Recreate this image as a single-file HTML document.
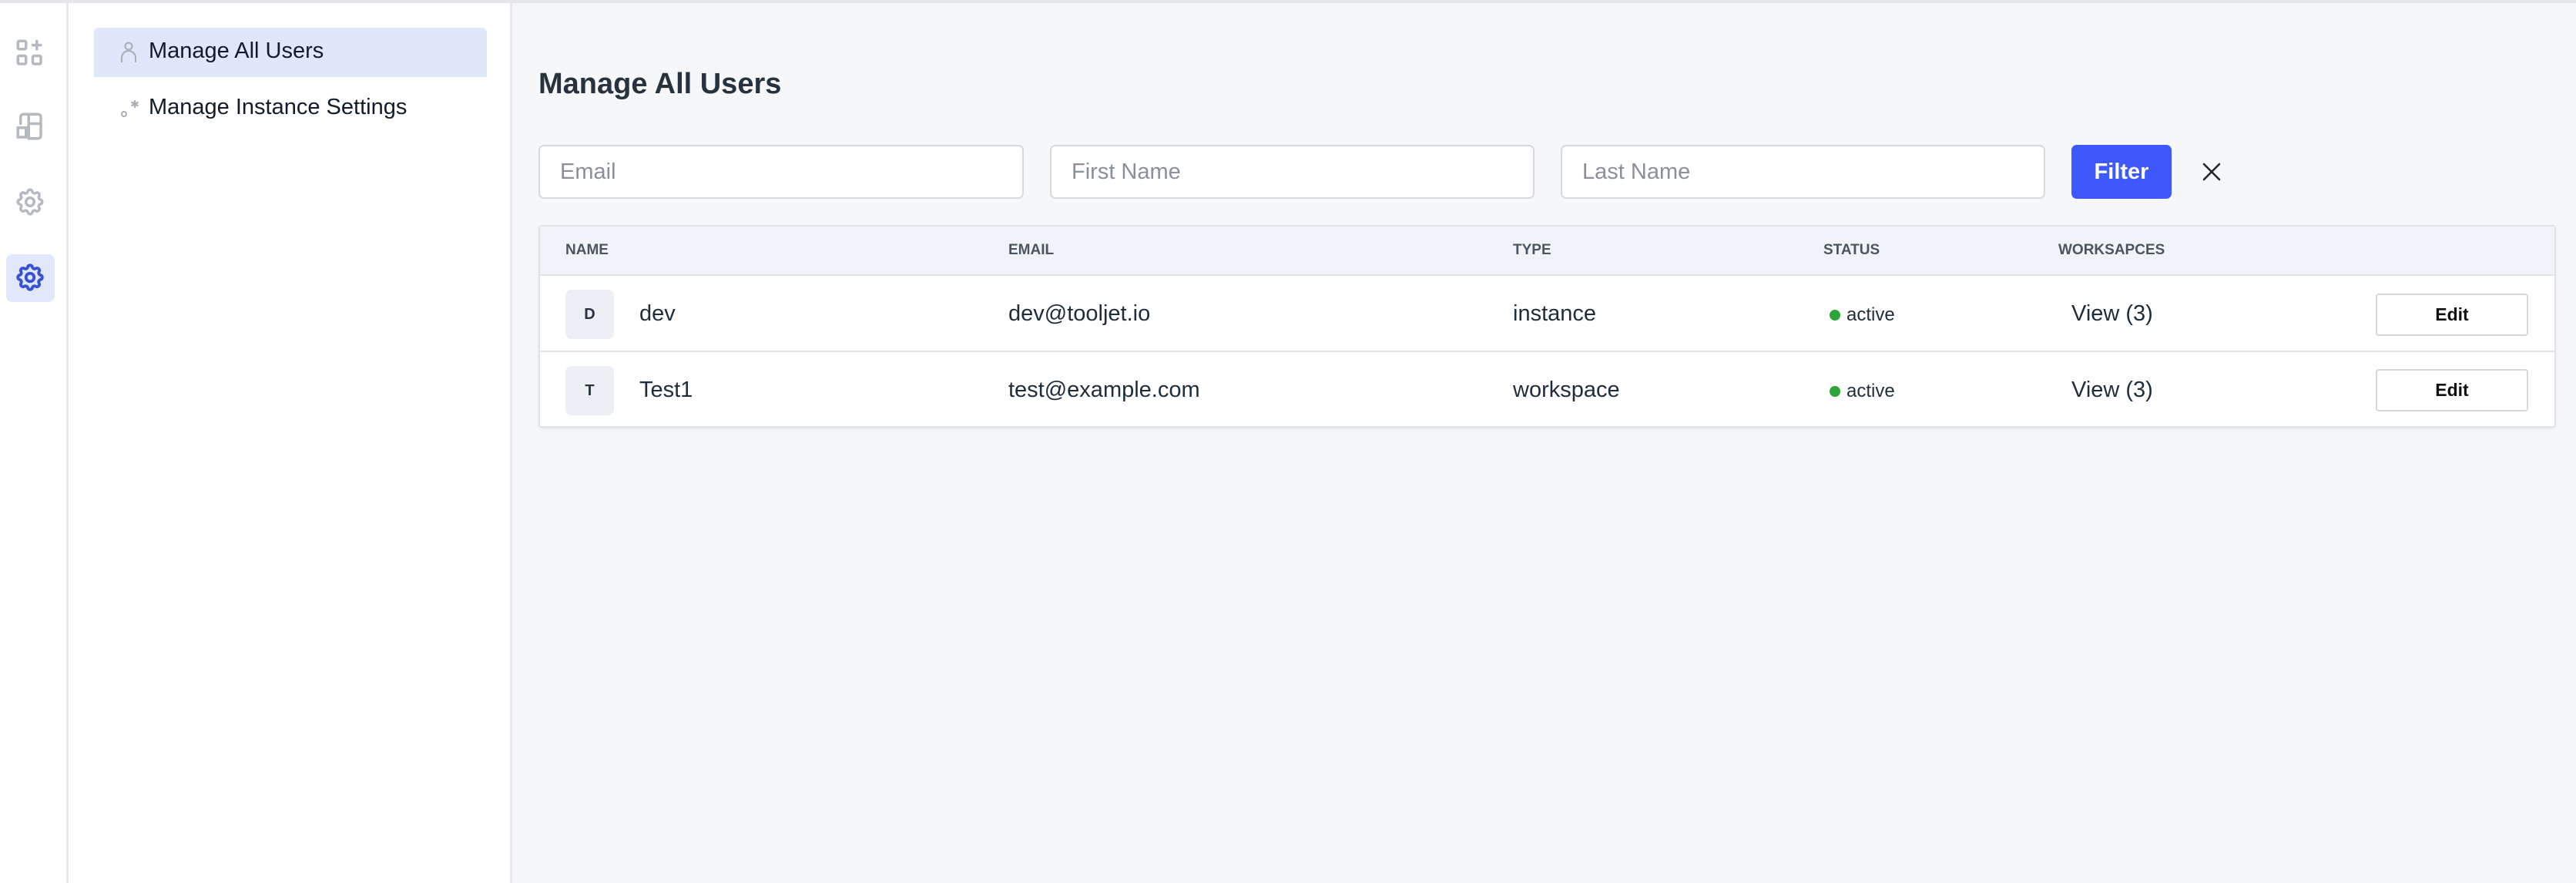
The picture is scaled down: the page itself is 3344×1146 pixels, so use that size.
<!DOCTYPE html>
<html><head><meta charset="utf-8"><style>
*{box-sizing:border-box;margin:0;padding:0}
body{width:3344px;height:1146px;position:relative;overflow:hidden;background:#f6f7f9;font-family:"Liberation Sans",sans-serif;color:#1f2d3a}
.abs{position:absolute}
.topline{left:0;top:0;width:3344px;height:4px;background:#e4e6ea}
.bar{left:0;top:4px;width:89px;height:1142px;background:#fff;border-right:3px solid #e6e8eb}
.side{left:89px;top:4px;width:576px;height:1142px;background:#fff;border-right:3px solid #e6e8eb}
.menu{font-size:29px;color:#121c28;display:flex;align-items:center}
.inp{height:70px;top:188px;background:#fff;border:2px solid #d6d9de;border-radius:7px;font-size:29px;color:#8a9099;padding-left:26px;display:flex;align-items:center}
.th{top:292px;height:66px;font-size:19px;font-weight:bold;color:#4a5560;display:flex;align-items:center}
.cell{font-size:29px;color:#1f2d3a;display:flex;align-items:center;height:98px}
.av{width:63px;height:64px;background:#eceff3;border-radius:8px;font-size:20px;font-weight:bold;color:#2a3440;display:flex;align-items:center;justify-content:center}
.edit{width:198px;height:55px;background:#fff;border:2px solid #d4d8dd;border-radius:4px;font-size:23px;font-weight:bold;color:#111;display:flex;align-items:center;justify-content:center}
.dot{width:14px;height:14px;border-radius:50%;background:#2ba637;display:inline-block;margin-right:8px}
</style></head><body>
<div class="abs topline"></div>
<div class="abs bar"></div>
<div class="abs side"></div>

<!-- icon bar -->
<svg class="abs" style="left:18px;top:48px" width="42" height="42" viewBox="0 0 24 24" fill="none" stroke="#b5bac0" stroke-width="2" stroke-linecap="round"><rect x="3" y="3" width="6" height="6" rx="1"/><rect x="3" y="14" width="6" height="6" rx="1"/><rect x="14" y="14" width="6" height="6" rx="1"/><path d="M17 3v6M14 6h6"/></svg>
<svg class="abs" style="left:18px;top:143px" width="42" height="42" viewBox="0 0 24 24" fill="none" stroke="#b5bac0" stroke-width="2" stroke-linecap="round"><path d="M5 10V5a2 2 0 0 1 2-2h11a2 2 0 0 1 2 2v14a2 2 0 0 1-2 2h-6M11 3v18M11 10h9M3 13h6v7H3z"/></svg>
<svg class="abs" style="left:18px;top:241px" width="42" height="42" viewBox="0 0 24 24" fill="none" stroke="#b5bac0" stroke-width="2"><path d="M10.3 4.3c.4-1.8 3-1.8 3.4 0a1.7 1.7 0 0 0 2.6 1.1c1.5-.9 3.3.8 2.4 2.4a1.7 1.7 0 0 0 1 2.5c1.8.4 1.8 3 0 3.4a1.7 1.7 0 0 0-1 2.6c.9 1.5-.9 3.3-2.4 2.4a1.7 1.7 0 0 0-2.6 1c-.4 1.8-3 1.8-3.4 0a1.7 1.7 0 0 0-2.6-1c-1.5.9-3.3-.9-2.4-2.4a1.7 1.7 0 0 0-1-2.6c-1.8-.4-1.8-3 0-3.4a1.7 1.7 0 0 0 1-2.5c-.9-1.6.9-3.3 2.4-2.4a1.7 1.7 0 0 0 2.6-1.1z"/><circle cx="12" cy="12" r="3"/></svg>
<div class="abs" style="left:8px;top:330px;width:63px;height:62px;background:#e1e8fb;border-radius:8px"></div>
<svg class="abs" style="left:18px;top:339px" width="42" height="42" viewBox="0 0 24 24" fill="none" stroke="#3750d8" stroke-width="2.2"><path d="M10.3 4.3c.4-1.8 3-1.8 3.4 0a1.7 1.7 0 0 0 2.6 1.1c1.5-.9 3.3.8 2.4 2.4a1.7 1.7 0 0 0 1 2.5c1.8.4 1.8 3 0 3.4a1.7 1.7 0 0 0-1 2.6c.9 1.5-.9 3.3-2.4 2.4a1.7 1.7 0 0 0-2.6 1c-.4 1.8-3 1.8-3.4 0a1.7 1.7 0 0 0-2.6-1c-1.5.9-3.3-.9-2.4-2.4a1.7 1.7 0 0 0-1-2.6c-1.8-.4-1.8-3 0-3.4a1.7 1.7 0 0 0 1-2.5c-.9-1.6.9-3.3 2.4-2.4a1.7 1.7 0 0 0 2.6-1.1z"/><circle cx="12" cy="12" r="3"/></svg>

<!-- sidebar menu -->
<div class="abs" style="left:122px;top:36px;width:510px;height:64px;background:#dfe7fb;border-radius:6px 6px 0 0"></div>
<svg class="abs" style="left:156px;top:54px" width="22" height="28" viewBox="0 0 22 28" fill="none" stroke="#a8aeb5" stroke-width="2"><circle cx="11" cy="6" r="4.5"/><path d="M2 27v-6a9 9 0 0 1 18 0v6"/></svg>
<div class="abs menu" style="left:193px;top:46px;height:40px">Manage All Users</div>
<svg class="abs" style="left:156px;top:128px" width="26" height="26" viewBox="0 0 26 26" fill="none" stroke="#a8aeb5" stroke-width="2"><circle cx="5" cy="20" r="3"/><path d="M19 2v10M14.5 4.5l9 5M23.5 4.5l-9 5" stroke-width="2.2"/></svg>
<div class="abs menu" style="left:193px;top:119px;height:40px">Manage Instance Settings</div>

<!-- main -->
<div class="abs" style="left:699px;top:88px;font-size:38px;font-weight:bold;color:#26323d">Manage All Users</div>
<div class="abs inp" style="left:699px;width:630px">Email</div>
<div class="abs inp" style="left:1363px;width:629px">First Name</div>
<div class="abs inp" style="left:2026px;width:629px">Last Name</div>
<div class="abs" style="left:2689px;top:188px;width:130px;height:70px;background:#3e59fb;border-radius:7px;color:#fff;font-size:29px;font-weight:bold;display:flex;align-items:center;justify-content:center">Filter</div>
<svg class="abs" style="left:2858px;top:210px" width="26" height="26" viewBox="0 0 26 26" stroke="#1e2730" stroke-width="2.6" stroke-linecap="round"><path d="M3 3l20 20M23 3L3 23"/></svg>

<div class="abs" style="left:699px;top:292px;width:2619px;height:263px;background:#fff;border:2px solid #dfe2e6;border-radius:4px;box-shadow:0 2px 3px rgba(0,0,0,.06)"></div>
<div class="abs" style="left:701px;top:294px;width:2615px;height:64px;background:#f0f3f7;border-bottom:2px solid #e0e3e7"></div>
<div class="abs" style="left:701px;top:455px;width:2615px;height:2px;background:#e0e3e7"></div>
<div class="abs th" style="left:734px">NAME</div>
<div class="abs th" style="left:1309px">EMAIL</div>
<div class="abs th" style="left:1964px">TYPE</div>
<div class="abs th" style="left:2367px">STATUS</div>
<div class="abs th" style="left:2672px">WORKSAPCES</div>

<div class="abs av" style="left:734px;top:376px">D</div>
<div class="abs cell" style="left:830px;top:358px">dev</div>
<div class="abs cell" style="left:1309px;top:358px">dev@tooljet.io</div>
<div class="abs cell" style="left:1964px;top:358px">instance</div>
<div class="abs cell" style="left:2375px;top:360px;font-size:24px"><span class="dot"></span>active</div>
<div class="abs cell" style="left:2689px;top:358px">View (3)</div>
<div class="abs edit" style="left:3084px;top:381px">Edit</div>

<div class="abs av" style="left:734px;top:475px">T</div>
<div class="abs cell" style="left:830px;top:457px">Test1</div>
<div class="abs cell" style="left:1309px;top:457px">test@example.com</div>
<div class="abs cell" style="left:1964px;top:457px">workspace</div>
<div class="abs cell" style="left:2375px;top:459px;font-size:24px"><span class="dot"></span>active</div>
<div class="abs cell" style="left:2689px;top:457px">View (3)</div>
<div class="abs edit" style="left:3084px;top:479px">Edit</div>
</body></html>
